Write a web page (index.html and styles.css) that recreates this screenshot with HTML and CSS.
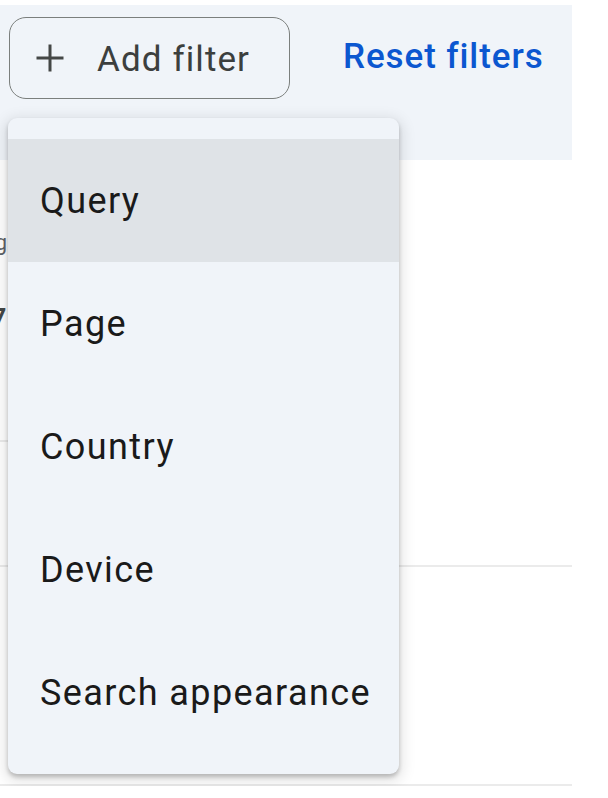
FILE: index.html
```html
<!DOCTYPE html>
<html lang="en">
<head>
<meta charset="utf-8">
<title>Add filter</title>
<link rel="stylesheet" href="styles.css">
</head>
<body>
<div class="page">
  <div class="toolbar">
    <button class="add-btn" type="button">
      <svg class="plus" width="30" height="30" viewBox="0 0 30 30" aria-hidden="true">
        <path d="M15 1.5V28.5M1.5 15H28.5" stroke="#444746" stroke-width="3" fill="none"/>
      </svg>
      <span>Add filter</span>
    </button>
    <a class="reset" href="#">Reset filters</a>
  </div>
  <div class="content">
    <div class="summary">
      <div class="card card-top">
        <div class="frag frag-label"><span>Average position ranking</span></div>
        <div class="frag frag-num"><span>27</span></div>
      </div>
    </div>
    <div class="card card-mid"></div>
    <div class="card card-low"></div>
  </div>

  <div class="menu" role="menu">
    <div class="item active" role="menuitem">Query</div>
    <div class="item" role="menuitem">Page</div>
    <div class="item" role="menuitem">Country</div>
    <div class="item" role="menuitem">Device</div>
    <div class="item" role="menuitem">Search appearance</div>
  </div>
</div>
</body>
</html>
```

FILE: styles.css
```css
* { box-sizing: border-box; }

html, body {
  margin: 0;
  padding: 0;
  background: #ffffff;
  font-family: Roboto, "Liberation Sans", Arial, sans-serif;
}

.page {
  position: relative;
  width: 572px;
  padding-top: 5px;
}

.toolbar {
  height: 155px;
  background: #f0f4f9;
  display: flex;
  align-items: flex-start;
  padding: 12px 0 0 9px;
}

.add-btn {
  display: flex;
  align-items: center;
  width: 281px;
  height: 82px;
  padding: 0 0 0 25px;
  border: 1.5px solid #7b7f7d;
  border-radius: 17px;
  background: transparent;
  font-family: inherit;
  font-size: 35px;
  letter-spacing: 1.1px;
  color: #3c3f3e;
  cursor: pointer;
}

.plus {
  flex: none;
  margin-right: 32px;
}

.add-btn span {
  position: relative;
  top: 1px;
}

.reset {
  margin: 20px 0 0 53px;
  font-size: 35px;
  font-weight: 500;
  letter-spacing: 0.9px;
  color: #0b57d0;
  text-decoration: none;
  line-height: 40px;
}

.content {
  display: flex;
  flex-direction: column;
}

.summary {
  display: flex;
  height: 282px;
}

.card {
  border-bottom: 2px solid #ebebeb;
}

.card-top {
  width: 240px;
  padding-top: 70px;
}

.card-mid {
  height: 125px;
}

.card-low {
  height: 219px;
}

.frag {
  width: 7px;
  overflow: hidden;
  display: flex;
  justify-content: flex-end;
  white-space: nowrap;
  color: #5f6368;
}

.frag-label {
  font-size: 22px;
  height: 32px;
}

.frag-num {
  margin-top: 38px;
  font-size: 40px;
  color: #444746;
  height: 50px;
}

.menu {
  position: absolute;
  left: 8px;
  top: 118px;
  width: 391px;
  padding: 21px 0 20px;
  background: #f0f4f9;
  border-radius: 9px;
  box-shadow: 0 3px 4px rgba(0, 0, 0, 0.22), 0 4px 14px 4px rgba(0, 0, 0, 0.10);
}

.item {
  height: 123px;
  display: flex;
  align-items: center;
  padding-left: 32px;
  font-size: 36px;
  letter-spacing: 1.4px;
  color: #1a1a1a;
}

.item.active {
  background: #dfe3e7;
}
```
